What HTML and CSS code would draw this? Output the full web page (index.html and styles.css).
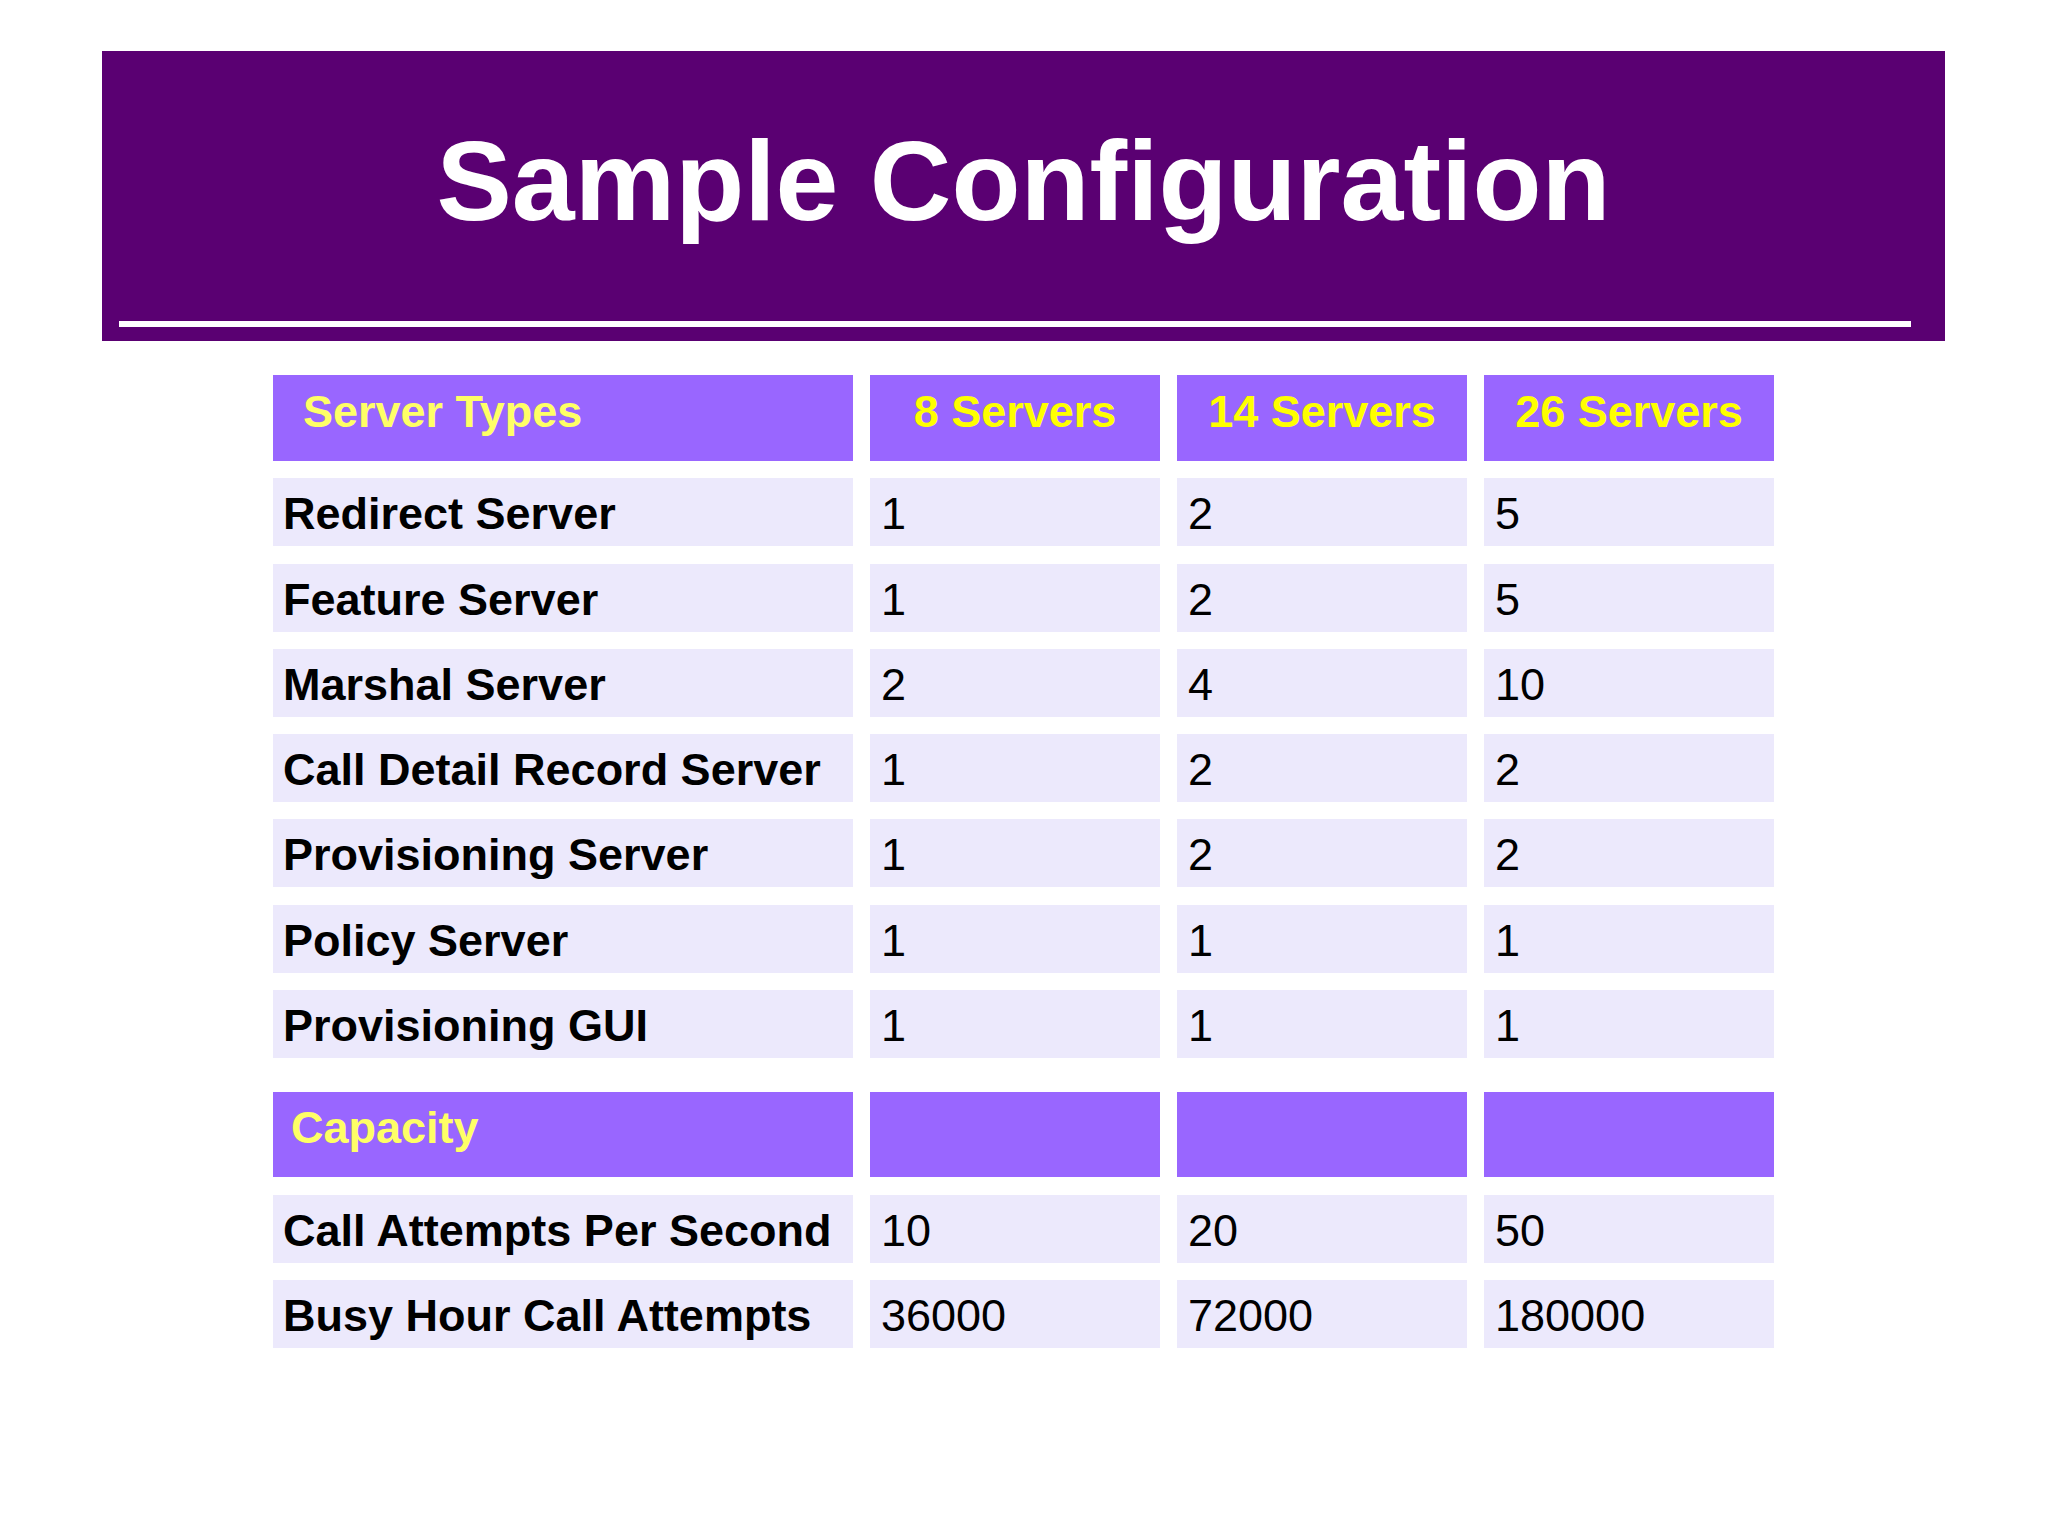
FILE: index.html
```html
<!DOCTYPE html>
<html lang="en">
<head>
<meta charset="utf-8">
<title>Sample Configuration</title>
<link rel="stylesheet" href="styles.css">
</head>
<body>
<div class="slide">
  <header class="banner">
    <h1 class="title">Sample Configuration</h1>
    <div class="rule"></div>
  </header>

  <div class="tbl">
    <div class="row head">
      <div class="cell label-head">Server Types</div>
      <div class="cell num-head">8 Servers</div>
      <div class="cell num-head">14 Servers</div>
      <div class="cell num-head">26 Servers</div>
    </div>
    <div class="row data">
      <div class="cell label">Redirect Server</div>
      <div class="cell num">1</div>
      <div class="cell num">2</div>
      <div class="cell num">5</div>
    </div>
    <div class="row data">
      <div class="cell label">Feature Server</div>
      <div class="cell num">1</div>
      <div class="cell num">2</div>
      <div class="cell num">5</div>
    </div>
    <div class="row data">
      <div class="cell label">Marshal Server</div>
      <div class="cell num">2</div>
      <div class="cell num">4</div>
      <div class="cell num">10</div>
    </div>
    <div class="row data">
      <div class="cell label">Call Detail Record Server</div>
      <div class="cell num">1</div>
      <div class="cell num">2</div>
      <div class="cell num">2</div>
    </div>
    <div class="row data">
      <div class="cell label">Provisioning Server</div>
      <div class="cell num">1</div>
      <div class="cell num">2</div>
      <div class="cell num">2</div>
    </div>
    <div class="row data">
      <div class="cell label">Policy Server</div>
      <div class="cell num">1</div>
      <div class="cell num">1</div>
      <div class="cell num">1</div>
    </div>
    <div class="row data">
      <div class="cell label">Provisioning GUI</div>
      <div class="cell num">1</div>
      <div class="cell num">1</div>
      <div class="cell num">1</div>
    </div>

    <div class="row head capacity">
      <div class="cell label-head cap">Capacity</div>
      <div class="cell num-head"></div>
      <div class="cell num-head"></div>
      <div class="cell num-head"></div>
    </div>
    <div class="row data">
      <div class="cell label">Call Attempts Per Second</div>
      <div class="cell num">10</div>
      <div class="cell num">20</div>
      <div class="cell num">50</div>
    </div>
    <div class="row data">
      <div class="cell label">Busy Hour Call Attempts</div>
      <div class="cell num">36000</div>
      <div class="cell num">72000</div>
      <div class="cell num">180000</div>
    </div>
  </div>
</div>
</body>
</html>
```

FILE: styles.css
```css
html, body {
  margin: 0;
  padding: 0;
  background: #ffffff;
}

body {
  width: 2048px;
  height: 1536px;
  overflow: hidden;
  font-family: "Liberation Sans", Arial, Helvetica, sans-serif;
}

.slide {
  padding-top: 51px;
}

.banner {
  margin-left: 102px;
  width: 1843px;
  height: 290px;
  background: #5a0072;
  display: flex;
  flex-direction: column;
  box-sizing: border-box;
  padding-top: 74px;
}

.title {
  margin: 0;
  color: #ffffff;
  font-size: 113px;
  line-height: 113px;
  font-weight: bold;
  text-align: center;
}

.rule {
  margin-top: auto;
  margin-bottom: 14px;
  margin-left: 17px;
  margin-right: 34px;
  height: 6px;
  background: #ffffff;
}

.tbl {
  margin-top: 34px;
  margin-left: 273px;
  display: flex;
  flex-direction: column;
  gap: 17.3px;
}

.row {
  display: grid;
  grid-template-columns: 580px 290px 290px 290px;
  column-gap: 17px;
}

.row.head {
  height: 86px;
}

.row.head.capacity {
  height: 85px;
  margin-top: 17px;
}

.row.data {
  height: 68px;
}

.cell {
  box-sizing: border-box;
  font-size: 45px;
  line-height: 45px;
  white-space: nowrap;
}

.head .cell {
  background: #9966ff;
  padding-top: 14px;
  font-weight: bold;
}

.label-head {
  color: #ffff66;
  padding-left: 30px;
}

.label-head.cap {
  padding-left: 18px;
  padding-top: 13px;
}

.num-head {
  color: #ffff00;
  text-align: center;
}

.data .cell {
  background: #ece9fc;
  padding-top: 13px;
  padding-left: 10px;
  color: #000000;
}

.label {
  font-weight: bold;
}

.num {
  font-weight: normal;
  padding-left: 11px;
}

.data .cell.num {
  padding-left: 11px;
}
```
